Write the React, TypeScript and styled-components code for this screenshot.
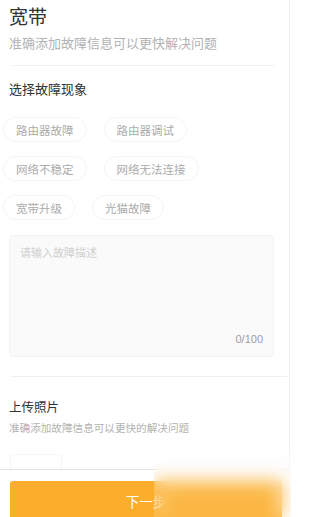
import styled, { createGlobalStyle } from "styled-components";

const GlobalStyle = createGlobalStyle`
  html, body {
    margin: 0;
    padding: 0;
    background: #fff;
    overflow: hidden;
  }
  body {
    font-family: "Noto Sans CJK SC", "Noto Sans", "Liberation Sans", sans-serif;
  }
`

const PageBase = styled.div`
  position: relative;
  width: 100%;
  height: 517px;
  background: #fff;
  display: flex;
  flex-direction: column;
  overflow: hidden;
`

const ContentBase = styled.div`
  flex: 1;
  overflow: hidden;
  width: 290px;
  box-sizing: border-box;
  border-right: 1px solid #efefef;
  padding: 0 0 0 9px;
`

const TitleBase = styled.div`
  font-size: 19px;
  line-height: 26px;
  color: #333;
  padding-top: 3px;
`

const SubTitleBase = styled.div<{ size: number }>`
  font-size: ${p => p.size}px;
  line-height: 20px;
  color: #b2b2b2;
`

const DividerBase = styled.div<{ left: number; right: number }>`
  height: 1px;
  background: #efefef;
  margin-left: ${p => p.left}px;
  margin-right: ${p => p.right}px;
`

const SectionTitleBase = styled.div`
  font-size: 13px;
  line-height: 20px;
  color: #333;
`

const ChipGridBase = styled.div`
  display: flex;
  flex-direction: column;
  gap: 14px;
  margin: 18px 0 0 -6px;
`

const ChipRowBase = styled.div`
  display: flex;
  gap: 17px;
`

const ChipBase = styled.div`
  height: 25px;
  line-height: 25px;
  padding: 0 12px;
  font-size: 11.5px;
  color: #ababab;
  border: 1px solid #f5f5f5;
  border-radius: 13px;
  box-sizing: border-box;
  white-space: nowrap;
`

const TextAreaBase = styled.div`
  position: relative;
  width: 265px;
  height: 122px;
  box-sizing: border-box;
  background: #fafafa;
  border: 1px solid #f3f3f3;
  border-radius: 3px;
  margin-top: 15px;
  padding: 8px 10px;
`

const PlaceholderBase = styled.div`
  font-size: 11px;
  line-height: 16px;
  color: #cfcfcf;
`

const CounterBase = styled.div`
  position: absolute;
  right: 10px;
  bottom: 10px;
  font-size: 11px;
  line-height: 14px;
  color: #9e9e9e;
  font-family: "Liberation Sans", sans-serif;
`

const UploadTitleBase = styled.div`
  font-size: 12.5px;
  line-height: 18px;
  color: #333;
  margin-top: 21px;
`

const UploadBoxBase = styled.div`
  width: 50px;
  height: 60px;
  border: 1px solid #f5f5f5;
  border-radius: 2px;
  margin: 16px 0 0 1px;
`

const FooterBase = styled.div`
  flex: none;
  width: 291px;
  height: 48px;
  border-top: 1px solid #e3e3e3;
  background: #fff;
  padding: 11px 9px 0 10px;
  box-sizing: border-box;
`

const NextButtonBase = styled.div`
  height: 40px;
  line-height: 40px;
  border-radius: 3px;
  background: #fbae2b;
  color: #fff;
  font-size: 13.5px;
  text-align: center;
`

const BlurBase = styled.div`
  position: absolute;
  left: 154px;
  top: 450px;
  width: 137px;
  bottom: 0;
  backdrop-filter: blur(9px);
  -webkit-backdrop-filter: blur(9px);
  background: rgba(255, 255, 255, 0.12);
`

const chips = [
  ["路由器故障", "路由器调试"],
  ["网络不稳定", "网络无法连接"],
  ["宽带升级", "光猫故障"],
]

const App = () => {
  return <PageBase>
    <GlobalStyle />
    <ContentBase>
      <TitleBase>宽带</TitleBase>
      <SubTitleBase size={13} style={{ marginTop: 4 }}>准确添加故障信息可以更快解决问题</SubTitleBase>
      <DividerBase left={3} right={14} style={{ marginTop: 12 }} />
      <SectionTitleBase style={{ marginTop: 13 }}>选择故障现象</SectionTitleBase>
      <ChipGridBase>
        {chips.map((row, i) => <ChipRowBase key={i}>
          {row.map(c => <ChipBase key={c}>{c}</ChipBase>)}
        </ChipRowBase>)}
      </ChipGridBase>
      <TextAreaBase>
        <PlaceholderBase>请输入故障描述</PlaceholderBase>
        <CounterBase>0/100</CounterBase>
      </TextAreaBase>
      <DividerBase left={2} right={2} style={{ marginTop: 19 }} />
      <UploadTitleBase>上传照片</UploadTitleBase>
      <SubTitleBase size={10.6} style={{ marginTop: 2 }}>准确添加故障信息可以更快的解决问题</SubTitleBase>
      <UploadBoxBase />
    </ContentBase>
    <FooterBase>
      <NextButtonBase>下一步</NextButtonBase>
    </FooterBase>
    <BlurBase />
  </PageBase>
}

export default App;
